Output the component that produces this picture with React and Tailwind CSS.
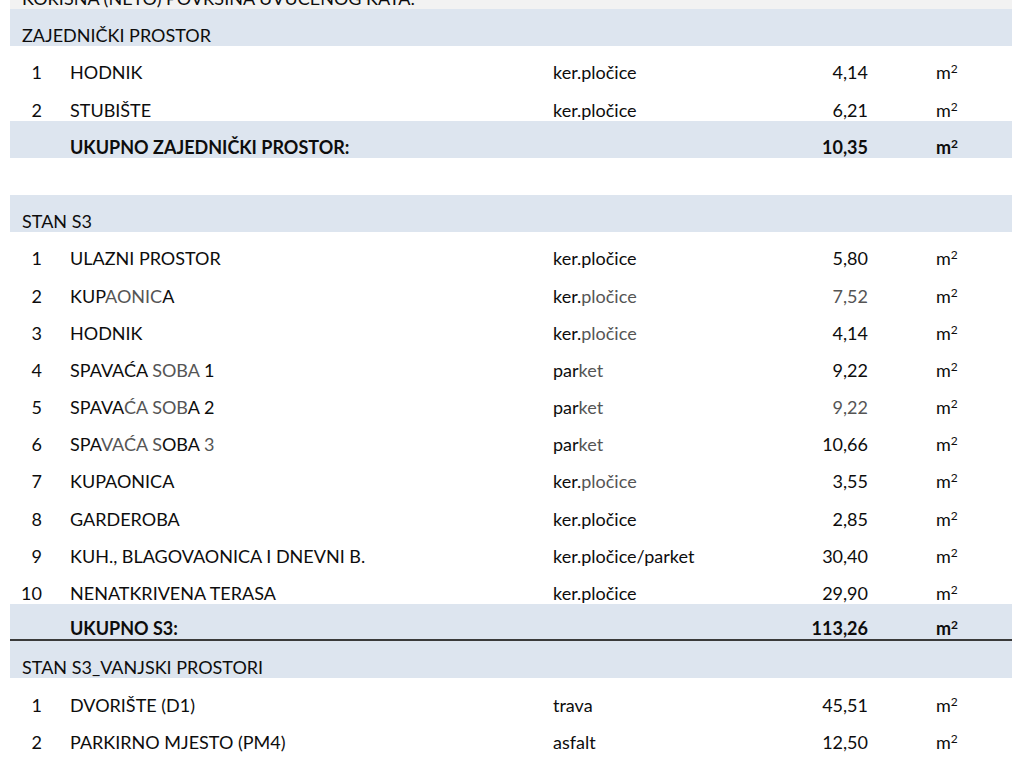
const zajednicki = [
  { n: '1', name: 'HODNIK', mat: 'ker.pločice', area: '4,14' },
  { n: '2', name: 'STUBIŠTE', mat: 'ker.pločice', area: '6,21' },
];

const stan = [
  { n: '1', name: 'ULAZNI PROSTOR', mat: 'ker.pločice', area: '5,80' },
  { n: '2', name: <>KUP<span className="text-[#555]">AONIC</span>A</>, mat: <>ker.<span className="text-[#555]">pločice</span></>, area: <span className="text-[#555]">7,52</span> },
  { n: '3', name: 'HODNIK', mat: <>ker.<span className="text-[#555]">pločice</span></>, area: '4,14' },
  { n: '4', name: <>SPAVAĆA <span className="text-[#555]">SOBA</span> 1</>, mat: <>par<span className="text-[#555]">ket</span></>, area: '9,22' },
  { n: '5', name: <>SPAVA<span className="text-[#555]">ĆA SOB</span>A 2</>, mat: <>par<span className="text-[#555]">ket</span></>, area: <span className="text-[#555]">9,22</span> },
  { n: '6', name: <>SPA<span className="text-[#555]">VAĆA S</span>OBA <span className="text-[#555]">3</span></>, mat: <>par<span className="text-[#555]">ket</span></>, area: '10,66' },
  { n: '7', name: 'KUPAONICA', mat: <>ker.<span className="text-[#555]">pločice</span></>, area: '3,55' },
  { n: '8', name: 'GARDEROBA', mat: 'ker.pločice', area: '2,85' },
  { n: '9', name: 'KUH., BLAGOVAONICA I DNEVNI B.', mat: 'ker.pločice/parket', area: '30,40' },
  { n: '10', name: 'NENATKRIVENA TERASA', mat: 'ker.pločice', area: '29,90' },
];

const vanjski = [
  { n: '1', name: 'DVORIŠTE (D1)', mat: 'trava', area: '45,51' },
  { n: '2', name: 'PARKIRNO MJESTO (PM4)', mat: 'asfalt', area: '12,50' },
];

function Unit() {
  return (
    <>
      m<span className="relative -top-[6px] text-[12px] leading-none">2</span>
    </>
  );
}

function Row({ n, name, mat, area, bold = false, band = false, line = false }) {
  return (
    <div
      className={`flex items-end h-[37.2px] pb-[1px] ${band ? 'bg-[#dde5ef]' : ''} ${line ? 'border-b-2 border-[#3a3a3a]' : ''} ${bold ? 'font-bold' : ''}`}
    >
      <div className="w-[50px] pr-[18px] text-right">{n}</div>
      <div className="w-[485px] pl-[10px]">{name}</div>
      <div className="w-[255px] pl-[8px]">{mat}</div>
      <div className="w-[78px] pr-[10px] text-right">{area}</div>
      <div className="flex-1 pl-[58px]">
        <Unit />
      </div>
    </div>
  );
}

function Heading({ children }) {
  return (
    <div className="flex items-end h-[37.2px] pb-[1px] pl-[12px] bg-[#dde5ef]">{children}</div>
  );
}

export default function App() {
  return (
    <div className="w-[1024px] h-[768px] overflow-hidden bg-white text-[#0d0d0d] text-[18px] leading-[20px] font-['Lato','Liberation_Sans',sans-serif]">
      <div className="ml-[10px] w-[1002px] -mt-[28px]">
        <div className="flex items-end h-[37px] pb-[1px] pl-[12px] bg-[#f2f2f2]">
          KORISNA (NETO) POVRŠINA UVUČENOG KATA:
        </div>

        <Heading>ZAJEDNIČKI PROSTOR</Heading>
        {zajednicki.map((r) => (
          <Row key={r.n} {...r} />
        ))}
        <Row n="" name="UKUPNO ZAJEDNIČKI PROSTOR:" mat="" area="10,35" bold band />

        <div className="h-[37.2px]" />

        <Heading>STAN S3</Heading>
        {stan.map((r) => (
          <Row key={r.n} {...r} />
        ))}
        <Row n="" name="UKUPNO S3:" mat="" area="113,26" bold band line />

        <Heading>STAN S3_VANJSKI PROSTORI</Heading>
        {vanjski.map((r) => (
          <Row key={r.n} {...r} />
        ))}
      </div>
    </div>
  );
}
